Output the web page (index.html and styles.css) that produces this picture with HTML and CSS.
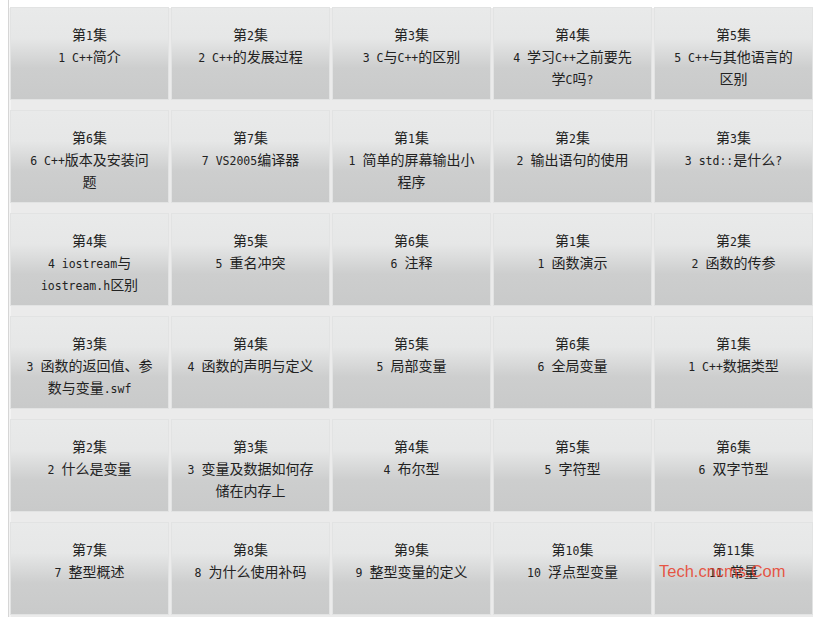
FILE: index.html
```html
<!DOCTYPE html>
<html lang="zh-CN">
<head>
<meta charset="utf-8">
<title>C++ 视频教程</title>
<link rel="stylesheet" href="styles.css">
</head>
<body>
<div class="page">
  <div class="grid">
    <div class="cell">第<span class="en">1</span>集<br><span class="en">1 C++</span>简介</div>
    <div class="cell">第<span class="en">2</span>集<br><span class="en">2 C++</span>的发展过程</div>
    <div class="cell">第<span class="en">3</span>集<br><span class="en">3 C</span>与<span class="en">C++</span>的区别</div>
    <div class="cell">第<span class="en">4</span>集<br><span class="en">4 </span>学习<span class="en">C++</span>之前要先<br>学<span class="en">C</span>吗<span class="en">?</span></div>
    <div class="cell">第<span class="en">5</span>集<br><span class="en">5 C++</span>与其他语言的<br>区别</div>

    <div class="cell">第<span class="en">6</span>集<br><span class="en">6 C++</span>版本及安装问<br>题</div>
    <div class="cell">第<span class="en">7</span>集<br><span class="en">7 VS2005</span>编译器</div>
    <div class="cell">第<span class="en">1</span>集<br><span class="en">1 </span>简单的屏幕输出小<br>程序</div>
    <div class="cell">第<span class="en">2</span>集<br><span class="en">2 </span>输出语句的使用</div>
    <div class="cell">第<span class="en">3</span>集<br><span class="en">3 std::</span>是什么<span class="en">?</span></div>

    <div class="cell">第<span class="en">4</span>集<br><span class="en">4 iostream</span>与<br><span class="en">iostream.h</span>区别</div>
    <div class="cell">第<span class="en">5</span>集<br><span class="en">5 </span>重名冲突</div>
    <div class="cell">第<span class="en">6</span>集<br><span class="en">6 </span>注释</div>
    <div class="cell">第<span class="en">1</span>集<br><span class="en">1 </span>函数演示</div>
    <div class="cell">第<span class="en">2</span>集<br><span class="en">2 </span>函数的传参</div>

    <div class="cell">第<span class="en">3</span>集<br><span class="en">3 </span>函数的返回值、参<br>数与变量<span class="en">.swf</span></div>
    <div class="cell">第<span class="en">4</span>集<br><span class="en">4 </span>函数的声明与定义</div>
    <div class="cell">第<span class="en">5</span>集<br><span class="en">5 </span>局部变量</div>
    <div class="cell">第<span class="en">6</span>集<br><span class="en">6 </span>全局变量</div>
    <div class="cell">第<span class="en">1</span>集<br><span class="en">1 C++</span>数据类型</div>

    <div class="cell">第<span class="en">2</span>集<br><span class="en">2 </span>什么是变量</div>
    <div class="cell">第<span class="en">3</span>集<br><span class="en">3 </span>变量及数据如何存<br>储在内存上</div>
    <div class="cell">第<span class="en">4</span>集<br><span class="en">4 </span>布尔型</div>
    <div class="cell">第<span class="en">5</span>集<br><span class="en">5 </span>字符型</div>
    <div class="cell">第<span class="en">6</span>集<br><span class="en">6 </span>双字节型</div>

    <div class="cell">第<span class="en">7</span>集<br><span class="en">7 </span>整型概述</div>
    <div class="cell">第<span class="en">8</span>集<br><span class="en">8 </span>为什么使用补码</div>
    <div class="cell">第<span class="en">9</span>集<br><span class="en">9 </span>整型变量的定义</div>
    <div class="cell">第<span class="en">10</span>集<br><span class="en">10 </span>浮点型变量</div>
    <div class="cell">第<span class="en">11</span>集<br><span class="en">11 </span>常量</div>
  </div>
  <span class="mark">Tech.cncms.Com</span>
</div>
</body>
</html>
```
FILE: styles.css
```css
html, body {
  margin: 0;
  padding: 0;
  background: #ffffff;
  overflow: hidden;
}

.page {
  position: relative;
  margin-left: 8px;
  width: 804px;
  height: 617px;
  border-left: 1px solid #d6d6d6;
  overflow: hidden;
}

.grid {
  margin-top: 8px;
  border-left: 2px solid #f3f3f3;
  padding-right: 3px;
  width: 801px;
  background: #ebebeb;
  display: grid;
  grid-template-columns: repeat(5, 157px);
  grid-auto-rows: 91px;
  column-gap: 4px;
  row-gap: 12px;
  padding-bottom: 12px;
}

.cell {
  box-sizing: border-box;
  padding-top: 15px;
  text-align: center;
  font-family: "Noto Sans CJK SC", sans-serif;
  font-size: 14px;
  line-height: 22px;
  color: #222222;
  background: linear-gradient(to bottom, #e9eaea 0%, #e6e7e7 33%, #cdcece 66%, #c9caca 100%);
  box-shadow: 0 0 0 1px #e2e3e3;
}

.en {
  font-family: "DejaVu Sans Mono", monospace;
  font-size: 11.5px;
  line-height: 0;
}

.mark {
  position: absolute;
  left: 650px;
  top: 561px;
  font-family: "Liberation Sans", Arial, sans-serif;
  font-size: 16.5px;
  line-height: 20px;
  color: rgba(232, 60, 40, 0.85);
  white-space: nowrap;
}
```
